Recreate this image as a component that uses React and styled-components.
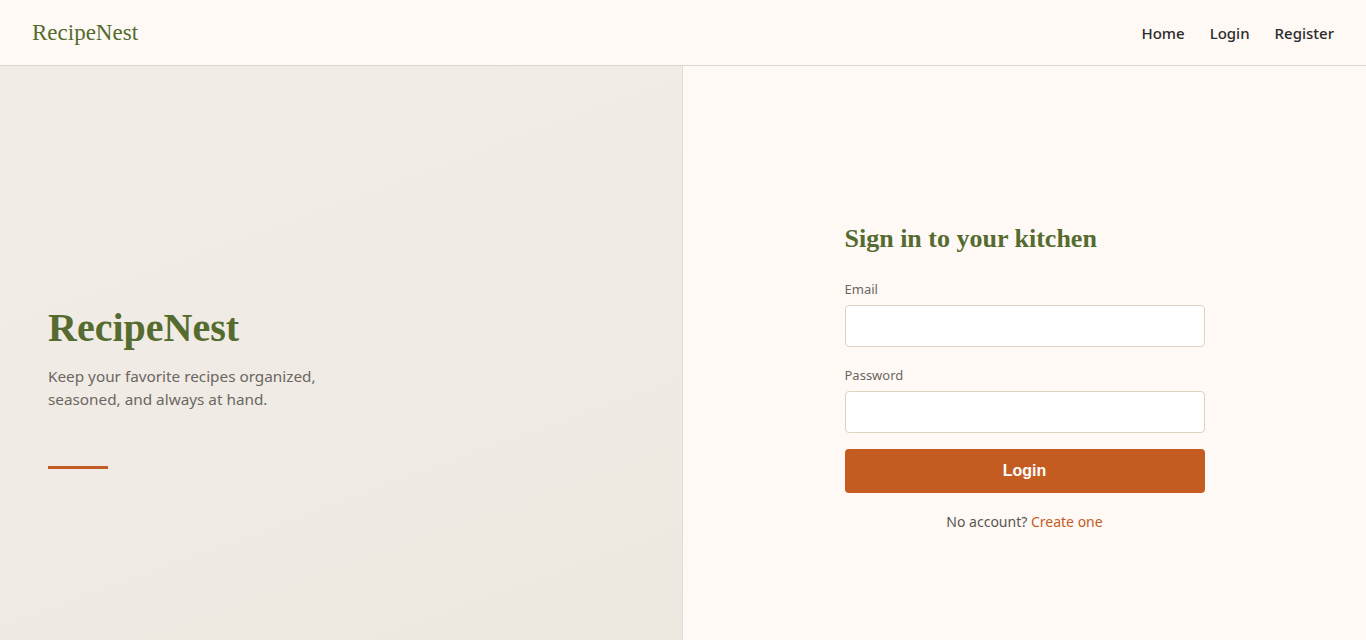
import React from "react";
import styled, { createGlobalStyle } from "styled-components";

const GlobalStyle = createGlobalStyle`
  html {
    overflow-y: scroll;
  }
  html::-webkit-scrollbar {
    width: 15px;
    background: #2b2b2b;
  }
  html::-webkit-scrollbar-thumb {
    background: #9f9f9f;
    border: 3px solid #2b2b2b;
    border-radius: 8px;
    min-height: 40px;
  }
  html::-webkit-scrollbar-button:single-button {
    height: 17px;
    background: #2b2b2b;
  }
  body {
    margin: 0;
    background: #fff9f5;
    font-family: "Noto Sans", "Open Sans", sans-serif;
    color: #2b2b2b;
  }
  * {
    box-sizing: border-box;
  }
`;

function App() {
  return (
    <>
      <GlobalStyle />
      <Header>
        <Logo href="#">RecipeNest</Logo>
        <Nav>
          <NavLink href="#">Home</NavLink>
          <NavLink href="#">Login</NavLink>
          <NavLink href="#">Register</NavLink>
        </Nav>
      </Header>
      <Main>
        <Intro>
          <IntroInner>
            <IntroTitle>RecipeNest</IntroTitle>
            <IntroText>
              Keep your favorite recipes organized, seasoned, and always at
              hand.
            </IntroText>
            <Accent />
          </IntroInner>
        </Intro>
        <FormSide>
          <Form onSubmit={(e) => e.preventDefault()}>
            <FormTitle>Sign in to your kitchen</FormTitle>
            <Field>
              <Label htmlFor="email">Email</Label>
              <Input id="email" type="email" />
            </Field>
            <Field>
              <Label htmlFor="password">Password</Label>
              <Input id="password" type="password" />
            </Field>
            <Submit type="submit">Login</Submit>
            <Hint>
              No account? <HintLink href="#">Create one</HintLink>
            </Hint>
          </Form>
        </FormSide>
      </Main>
    </>
  );
}

const Header = styled.header`
  display: flex;
  justify-content: space-between;
  align-items: center;
  height: 66px;
  padding: 0 32px;
  background: #fff9f5;
  border-bottom: 1px solid #ddd6ce;
`;

const Logo = styled.a`
  font-family: "Liberation Serif", "Times New Roman", serif;
  font-size: 23px;
  color: #556b2f;
  text-decoration: none;
`;

const Nav = styled.nav`
  display: flex;
  gap: 25px;
`;

const NavLink = styled.a`
  font-size: 15px;
  font-weight: 500;
  color: #2b2b2b;
  text-decoration: none;
`;

const Main = styled.main`
  display: grid;
  grid-template-columns: 1fr 1fr;
  min-height: 100vh;
`;

const Intro = styled.section`
  display: flex;
  align-items: center;
  padding: 0 48px;
  background: linear-gradient(160deg, #f1ece6 0%, #efebe4 60%, #ece8de 100%);
  border-right: 1px solid #e3dccf;
`;

const IntroInner = styled.div`
  max-width: 290px;
`;

const IntroTitle = styled.h1`
  margin: 0 0 14px;
  font-family: "Liberation Serif", "Times New Roman", serif;
  font-size: 40px;
  font-weight: 700;
  color: #556b2f;
`;

const IntroText = styled.p`
  margin: 0;
  font-size: 15.3px;
  line-height: 23px;
  color: #6b6662;
`;

const Accent = styled.div`
  width: 60px;
  height: 3px;
  margin-top: 55px;
  background: #c45c26;
`;

const FormSide = styled.section`
  display: flex;
  align-items: center;
  justify-content: center;
  padding-bottom: 17px;
  background: #fff9f5;
`;

const Form = styled.form`
  width: 360px;
  display: flex;
  flex-direction: column;
`;

const FormTitle = styled.h2`
  margin: 0 0 26px;
  font-family: "Liberation Serif", "Times New Roman", serif;
  font-size: 26px;
  font-weight: 700;
  color: #556b2f;
`;

const Field = styled.div`
  display: flex;
  flex-direction: column;
  gap: 7px;
  margin-bottom: 19px;
`;

const Label = styled.label`
  font-size: 13px;
  color: #6b6662;
`;

const Input = styled.input`
  height: 42px;
  padding: 0 12px;
  border: 1px solid #ddd2c3;
  border-radius: 4px;
  background: #fff;
  font-size: 15px;
  outline: none;
`;

const Submit = styled.button`
  height: 44px;
  margin-top: -3px;
  border: none;
  border-radius: 4px;
  background: #c45c22;
  color: #fff;
  font-family: "Liberation Sans", Arial, sans-serif;
  font-size: 16px;
  font-weight: 700;
  cursor: pointer;
`;

const Hint = styled.p`
  margin: 19px 0 0;
  text-align: center;
  font-size: 14px;
  color: #5a5550;
`;

const HintLink = styled.a`
  color: #c45c22;
  text-decoration: none;
`;

export default App;
